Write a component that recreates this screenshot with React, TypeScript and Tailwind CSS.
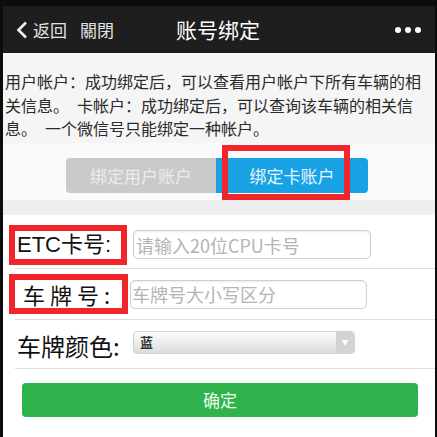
import { useState } from 'react';

const cjk = { fontFamily: '"Noto Sans CJK SC", "Noto Sans", sans-serif' };

const Dots = () => (
  <div className="flex items-center gap-[4px] justify-end pr-[14px]">
    <span className="w-[6px] h-[6px] rounded-full bg-white"></span>
    <span className="w-[6px] h-[6px] rounded-full bg-white"></span>
    <span className="w-[6px] h-[6px] rounded-full bg-white"></span>
  </div>
);

const App = () => {
  const [tab, setTab] = useState<'user' | 'card'>('card');

  return (
    <div className="w-[437px] h-[437px] bg-[#0c0c0c] pt-[6px] pl-[3px] pr-[2px] overflow-hidden" style={cjk}>
      {/* nav bar */}
      <div className="h-[47px] bg-[#1e1e1e] grid grid-cols-[1fr_auto_1fr] items-center">
        <div className="flex items-center pl-[13px] text-[17px] text-[#e2e2e2]">
          <svg width="12" height="18" viewBox="0 0 12 18" className="mr-[5px]">
            <path d="M10 1.5 L2.5 9 L10 16.5" fill="none" stroke="#f0f0f0" strokeWidth="2.6" />
          </svg>
          <span>返回</span>
          <span className="ml-[13px]">關閉</span>
        </div>
        <h1 className="text-[21px] text-white px-[2px] -ml-[2px]">账号绑定</h1>
        <Dots />
      </div>

      {/* intro text */}
      <div className="bg-[#f5f5f5] h-[90px] pt-[17px] pl-[2px] text-[16px] leading-[23.5px] text-[#2b2b2b] whitespace-nowrap">
        用户帐户：成功绑定后，可以查看用户帐户下所有车辆的相<br />
        关信息。<span className="ml-[8px]">卡帐户：成功绑定后，可以查询该车辆的相关信</span><br />
        息。<span className="ml-[8px]">一个微信号只能绑定一种帐户。</span>
      </div>

      {/* tabs */}
      <div className="bg-[#fafafa] h-[57px] pt-[15px] flex justify-center">
        <div className="relative flex h-[35px] ml-[-4px]">
          <button
            onClick={() => setTab('user')}
            className={
              'w-[150px] h-full rounded-l-[4px] text-[17px] ' +
              (tab === 'user' ? 'bg-[#18a2e3] text-[#e6f6ff]' : 'bg-[#cacaca] text-[#ececec]')
            }
          >
            绑定用户账户
          </button>
          <button
            onClick={() => setTab('card')}
            className={
              'w-[152px] h-full rounded-r-[4px] text-[17px] ' +
              (tab === 'card' ? 'bg-[#18a2e3] text-[#e6f6ff]' : 'bg-[#cacaca] text-[#ececec]')
            }
          >
            绑定卡账户
          </button>
          <div className="absolute left-[156px] top-[-13px] w-[128px] h-[55px] border-[6px] border-[#f1262b] pointer-events-none"></div>
        </div>
      </div>
      <div className="h-[15px] bg-[#efefef]"></div>

      {/* form */}
      <div className="bg-white">
        <div className="h-[53px] pt-[6px] pl-[6px] flex items-center">
          <div className="w-[118px] h-[40px] border-[6px] border-[#f1262b] flex items-center pl-[2px] text-[22px] text-[#111] whitespace-nowrap" style={{ fontFamily: '"Liberation Sans", "Noto Sans CJK SC", sans-serif' }}>
            ETC卡号:
          </div>
          <input
            className="ml-[6px] w-[238px] h-[29px] rounded-[5px] border border-[#cfcfcf] shadow-[inset_0_1px_2px_rgba(0,0,0,0.08)] px-[2px] text-[18px] placeholder:text-[#b4b4b4] outline-none"
            placeholder="请输入20位CPU卡号"
            style={cjk}
          />
        </div>
        <div className="h-px bg-[#dedede] ml-[12px]"></div>

        <div className="h-[50px] pl-[6px] flex items-center">
          <div className="w-[119px] h-[40px] border-[6px] border-[#f1262b] flex items-center pl-[8px] text-[22px] text-[#111] whitespace-nowrap tracking-[5px]">
            车牌号:
          </div>
          <input
            className="ml-[2px] w-[237px] h-[29px] rounded-[5px] border border-[#cfcfcf] shadow-[inset_0_1px_2px_rgba(0,0,0,0.08)] px-[1px] text-[18px] placeholder:text-[#b4b4b4] outline-none"
            placeholder="车牌号大小写区分"
            style={cjk}
          />
        </div>
        <div className="h-px bg-[#dedede] ml-[12px]"></div>

        <div className="h-[48px] pt-[4px] pl-[6px] flex items-center">
          <div className="w-[118px] h-[40px] border-[6px] border-transparent flex items-center pl-[2px] text-[24px] text-[#111] whitespace-nowrap">
            车牌颜色:
          </div>
          <div className="ml-[6px] -mt-[8px] w-[222px] h-[23px] rounded-[4px] border border-[#d2d2d2] bg-gradient-to-b from-[#fdfdfd] to-[#dcdcdc] flex items-center">
            <span className="pl-[6px] text-[13px] font-bold text-[#333] flex-1">蓝</span>
            <span className="w-[18px] h-full bg-[#d3d3d3] rounded-r-[4px] flex items-center justify-center text-[7px] text-white">▼</span>
          </div>
        </div>
        <div className="h-px bg-[#dedede] ml-[12px]"></div>

        <div className="pt-[14px] pl-[19px] pr-[17px] pb-[20px]">
          <button className="w-full h-[34px] rounded-[4px] bg-[#30b24c] text-[17px] text-[#eaffea]">确定</button>
        </div>
      </div>
    </div>
  );
};

export default App;
